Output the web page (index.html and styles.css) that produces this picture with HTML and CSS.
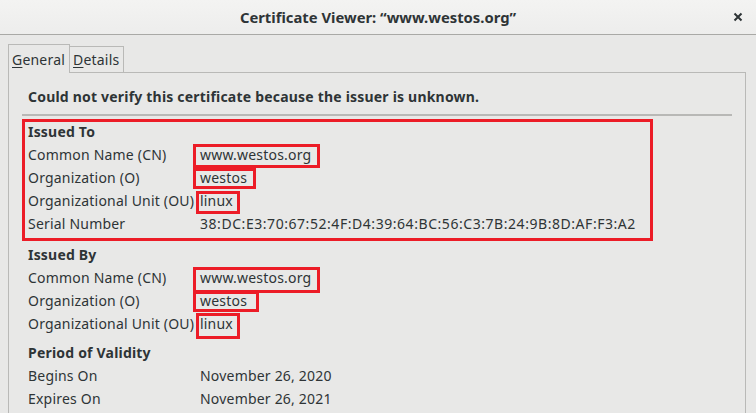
FILE: index.html
```html
<!DOCTYPE html>
<html lang="en">
<head>
    <meta charset="UTF-8">
    <meta name="viewport" content="width=device-width, initial-scale=1.0">
    <title>Certificate Viewer</title>
    <link rel="stylesheet" href="styles.css">
</head>
<body>
    <div class="titlebar">
        <span class="title">Certificate Viewer: “www.westos.org”</span>
        <button class="close-btn" aria-label="Close">
            <svg width="10" height="10" viewBox="0 0 10 10">
                <path d="M1.5 1.5 L8.5 8.5 M8.5 1.5 L1.5 8.5" stroke="#2e3436" stroke-width="2" fill="none"/>
            </svg>
        </button>
    </div>

    <div class="tabs">
        <div class="tab active"><u>G</u>eneral</div>
        <div class="tab"><u>D</u>etails</div>
    </div>

    <div class="panel">
        <div class="panel-inner">
            <div class="notice">Could not verify this certificate because the issuer is unknown.</div>
            <div class="separator"></div>

            <div class="section section-marked">
                <div class="section-title">Issued To</div>
                <div class="row"><span class="label">Common Name (CN)</span><span class="value mark">www.westos.org</span></div>
                <div class="row"><span class="label">Organization (O)</span><span class="value mark mark-short">westos</span></div>
                <div class="row"><span class="label">Organizational Unit (OU)</span><span class="value mark mark-tight">linux</span></div>
                <div class="row"><span class="label">Serial Number</span><span class="value serial">38:DC:E3:70:67:52:4F:D4:39:64:BC:56:C3:7B:24:9B:8D:AF:F3:A2</span></div>
            </div>

            <div class="section">
                <div class="section-title">Issued By</div>
                <div class="row"><span class="label">Common Name (CN)</span><span class="value mark mark-low">www.westos.org</span></div>
                <div class="row"><span class="label">Organization (O)</span><span class="value mark mark-short mark-wide">westos</span></div>
                <div class="row"><span class="label">Organizational Unit (OU)</span><span class="value mark mark-tight mark-low">linux</span></div>
            </div>

            <div class="section section-period">
                <div class="section-title">Period of Validity</div>
                <div class="row"><span class="label">Begins On</span><span class="value">November 26, 2020</span></div>
                <div class="row"><span class="label">Expires On</span><span class="value">November 26, 2021</span></div>
            </div>
        </div>
    </div>
</body>
</html>
```

FILE: styles.css
```css
body {
    margin: 0;
    height: 413px;
    overflow: hidden;
    background: #e8e8e7;
    font-family: "Noto Sans", "Open Sans", sans-serif;
    font-size: 14px;
    letter-spacing: 0.2px;
    color: #2e3436;
}
.titlebar {
    height: 34px;
    border-bottom: 1px solid #a9a9a6;
    background: linear-gradient(#f3f3f2, #ededec);
    display: flex;
    align-items: center;
    justify-content: center;
    position: relative;
}
.title {
    font-weight: bold;
    font-size: 14.8px;
    letter-spacing: 0;
    color: #2e3436;
}
.close-btn {
    position: absolute;
    right: 13px;
    top: 12px;
    border: none;
    background: none;
    padding: 0;
    width: 10px;
    height: 10px;
    display: flex;
}
.tabs {
    display: flex;
    align-items: flex-end;
    padding-left: 8px;
    margin-top: 9px;
    height: 28px;
}
.tab {
    height: 25px;
    line-height: 25px;
    padding: 0 4px 0 3px;
    border: 1px solid #b9b9b7;
    border-bottom: none;
    border-left: none;
    color: #2e3436;
}
.tab.active {
    height: 28px;
    line-height: 29px;
    border-left: 1px solid #b9b9b7;
    padding: 0 4px 0 3px;
    position: relative;
    top: 1px;
    background: #e8e8e7;
}
.tab u {
    text-underline-offset: 2px;
}
.panel {
    margin: 0 10px 0 8px;
    border: 1px solid #b9b9b7;
    border-bottom: none;
    height: 340px;
}
.panel-inner {
    padding: 12px 13px 0 13px;
}
.notice {
    font-weight: bold;
    line-height: 23px;
    padding-left: 6px;
}
.separator {
    height: 2px;
    background: #b8b8b6;
    margin: 6px 0 4px 0;
}
.section {
    position: relative;
    margin-top: 8px;
}
.section-marked {
    margin-top: 0;
}
.section-marked::after {
    content: "";
    position: absolute;
    top: -1px;
    left: 0;
    width: 625px;
    bottom: -6px;
    border: 3px solid #ec1c27;
}
.section-period {
    margin-top: 6px;
}
.section-title {
    font-weight: bold;
    line-height: 23px;
    padding-left: 6px;
}
.row {
    display: grid;
    grid-template-columns: 172px auto;
    line-height: 23px;
    padding-left: 6px;
}
.label {
    white-space: nowrap;
}
.value {
    justify-self: start;
    white-space: nowrap;
}
.serial {
    letter-spacing: 0.55px;
}
.mark {
    position: relative;
}
.mark::after {
    content: "";
    position: absolute;
    top: 1px;
    bottom: -2px;
    left: -7px;
    right: -9px;
    border: 3px solid #ec1c27;
}
.mark-short::after {
    top: 2px;
    bottom: 0;
    right: -9px;
}
.mark-wide::after {
    right: -12px;
}
.mark-tight::after {
    left: -4px;
    top: 2px;
    right: -7px;
}
.mark-low::after {
    top: 1px;
    bottom: -4px;
}
```
